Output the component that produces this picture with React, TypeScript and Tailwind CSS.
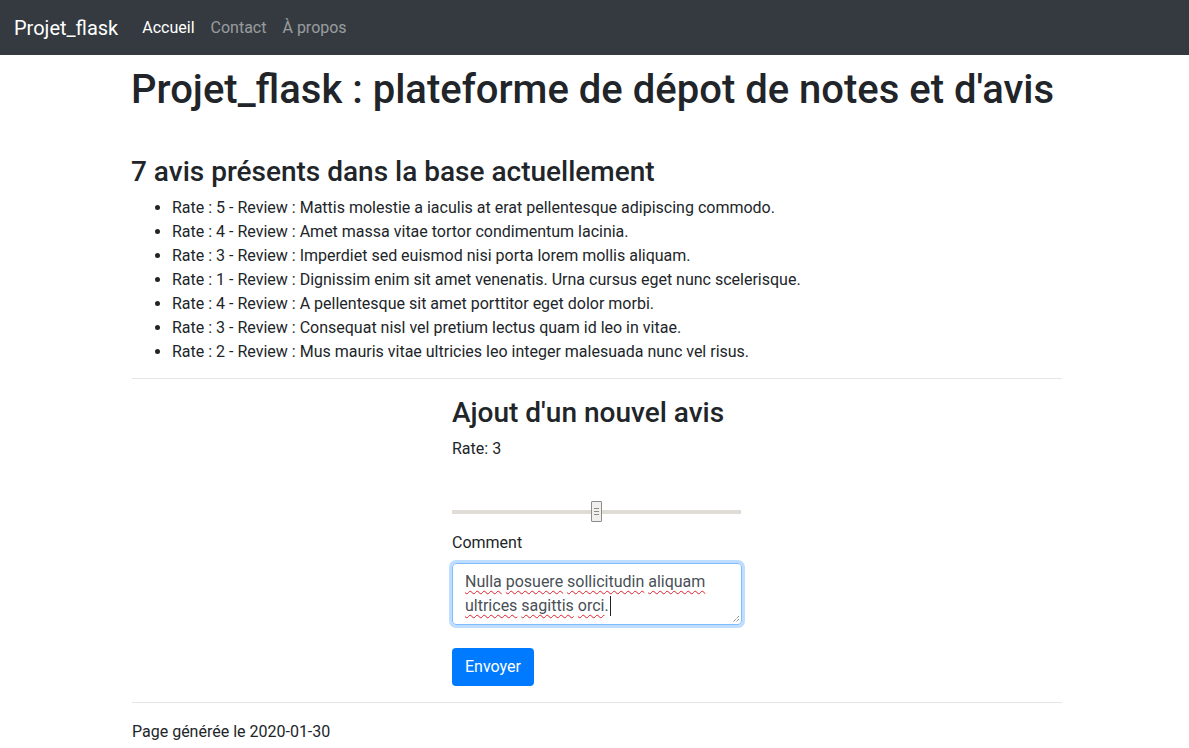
import React from "react";

const reviews: [number, string][] = [
  [5, "Mattis molestie a iaculis at erat pellentesque adipiscing commodo."],
  [4, "Amet massa vitae tortor condimentum lacinia."],
  [3, "Imperdiet sed euismod nisi porta lorem mollis aliquam."],
  [1, "Dignissim enim sit amet venenatis. Urna cursus eget nunc scelerisque."],
  [4, "A pellentesque sit amet porttitor eget dolor morbi."],
  [3, "Consequat nisl vel pretium lectus quam id leo in vitae."],
  [2, "Mus mauris vitae ultricies leo integer malesuada nunc vel risus."],
];

const wavy = "underline decoration-wavy decoration-[#e0202a] decoration-1 underline-offset-[3px]";

export default function App() {
  return (
    <div className="min-h-[748px] bg-white text-[#212529] text-[16px] leading-[24px] font-['Roboto','Liberation_Sans',sans-serif]">
      <nav className="h-[55px] bg-[#343a40] flex items-center px-[14px]">
        <span className="text-white text-[20px] leading-[30px] mr-[16px]">Projet_flask</span>
        <div className="flex">
          <span className="px-[8px] text-white">Accueil</span>
          <span className="px-[8px] text-[rgba(255,255,255,0.5)]">Contact</span>
          <span className="px-[8px] text-[rgba(255,255,255,0.5)]">À propos</span>
        </div>
      </nav>

      <main className="ml-[131px] w-[931px]">
        <h1 className="text-[40px] leading-[48px] font-medium mt-[11px] mb-[8px]">
          Projet_flask : plateforme de dépot de notes et d'avis
        </h1>
        <h2 className="text-[28px] leading-[34px] font-medium mt-[41px] mb-[7px]">
          7 avis présents dans la base actuellement
        </h2>
        <ul className="list-disc pl-[41px] mb-[14px]">
          {reviews.map(([r, t], i) => (
            <li key={i}>
              Rate : {r} - Review : {t}
            </li>
          ))}
        </ul>
        <hr className="border-0 border-t border-[rgba(0,0,0,0.1)] ml-[1px]" />

        <div className="ml-[321px] w-[290px] mt-[17px]">
          <h3 className="text-[28px] leading-[34px] font-medium mb-[7px]">Ajout d'un nouvel avis</h3>
          <div>Rate: 3</div>
          <div className="relative h-[22px] mt-[40px] flex items-center">
            <div className="w-[289px] h-[4px] bg-[#dfdcd5]" />
            <div className="absolute left-[139px] top-0 w-[11px] h-[21px] border border-[#8d8b87] bg-[#f0efed] rounded-[1px] flex flex-col items-center justify-center gap-[2px]">
              <div className="w-[5px] h-px bg-[#8d8b87]" />
              <div className="w-[5px] h-px bg-[#8d8b87]" />
              <div className="w-[5px] h-px bg-[#8d8b87]" />
            </div>
          </div>
          <div className="mt-[8px] mb-[8px]">Comment</div>
          <div className="relative w-[290px] h-[62px] border border-[#80bdff] rounded-[4px] shadow-[0_0_0_3px_rgba(0,123,255,0.25)] px-[12px] py-[6px] text-[#495057]">
            <div>
              <span className={wavy}>Nulla</span> <span className={wavy}>posuere</span>{" "}
              <span className={wavy}>sollicitudin</span> <span className={wavy}>aliquam</span>
            </div>
            <div className="flex items-center">
              <span>
                <span className={wavy}>ultrices</span> <span className={wavy}>sagittis</span>{" "}
                <span className={wavy}>orci</span>.
              </span>
              <span className="inline-block w-px h-[20px] bg-[#222] ml-[1px]" />
            </div>
            <svg className="absolute right-[1px] bottom-[1px]" width="8" height="8" viewBox="0 0 8 8">
              <path d="M7 1 L1 7 M7 4 L4 7" stroke="#555" strokeWidth="1" strokeDasharray="1 1" />
            </svg>
          </div>
          <button className="mt-[23px] h-[38px] px-[13px] bg-[#007bff] text-white rounded-[4px] leading-[24px]">
            Envoyer
          </button>
        </div>

        <hr className="border-0 border-t border-[rgba(0,0,0,0.1)] mt-[16px] ml-[1px]" />
        <div className="mt-[17px] ml-[1px]">Page générée le 2020-01-30</div>
      </main>
    </div>
  );
}
